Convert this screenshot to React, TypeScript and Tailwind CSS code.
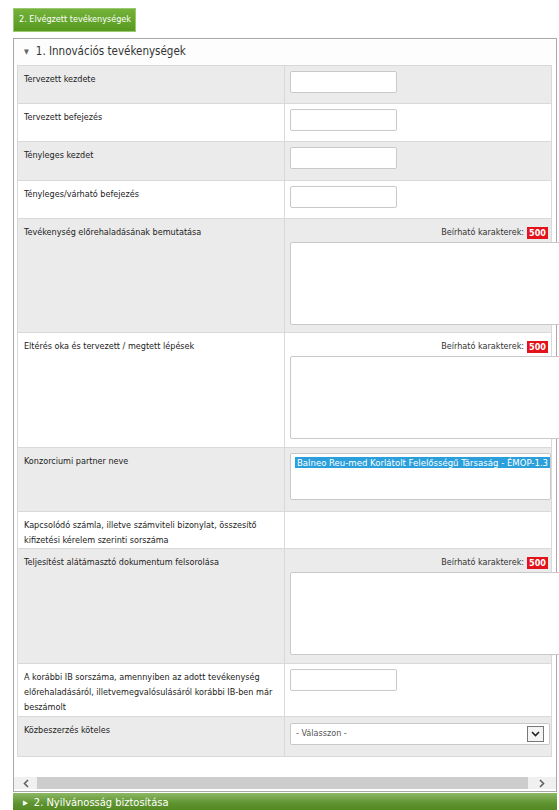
import React from "react";

const font = "font-['DejaVu_Sans_Condensed','DejaVu_Sans',sans-serif]";

type Row = {
  label: string[];
  kind: "input" | "textarea" | "list" | "empty" | "select";
  h: string;
};

const rows: Row[] = [
  { label: ["Tervezett kezdete"], kind: "input", h: "h-[38px]" },
  { label: ["Tervezett befejezés"], kind: "input", h: "h-[38px]" },
  { label: ["Tényleges kezdet"], kind: "input", h: "h-[39px]" },
  { label: ["Tényleges/várható befejezés"], kind: "input", h: "h-[38px]" },
  { label: ["Tevékenység előrehaladásának bemutatása"], kind: "textarea", h: "h-[114px]" },
  { label: ["Eltérés oka és tervezett / megtett lépések"], kind: "textarea", h: "h-[115px]" },
  { label: ["Konzorciumi partner neve"], kind: "list", h: "h-[64px]" },
  {
    label: ["Kapcsolódó számla, illetve számviteli bizonylat, összesítő", "kifizetési kérelem szerinti sorszáma"],
    kind: "empty",
    h: "h-[37px]",
  },
  { label: ["Teljesítést alátámasztó dokumentum felsorolása"], kind: "textarea", h: "h-[115px]" },
  {
    label: [
      "A korábbi IB sorszáma, amennyiben az adott tevékenység",
      "előrehaladásáról, illetvemegvalósulásáról korábbi IB-ben már",
      "beszámolt",
    ],
    kind: "input",
    h: "h-[53px]",
  },
  { label: ["Közbeszerzés köteles"], kind: "select", h: "h-[40px]" },
];

function Cell({ row }: { row: Row }) {
  if (row.kind === "input") {
    return <div className="mt-[5px] h-[22px] w-[107px] rounded-[2px] border border-[#c9c9c9] bg-white" />;
  }
  if (row.kind === "textarea") {
    return (
      <div className="pt-[7px]">
        <div className="flex items-center justify-end pr-[3px] text-[9px] text-[#333]">
          <span>Beírható karakterek:</span>
          <span className="ml-[3px] bg-[#e3131b] px-[2px] font-bold leading-[12px] text-white">500</span>
        </div>
        <div className="relative z-10 mt-[2px] h-[83px] w-[300px] rounded-[2px] border border-[#c9c9c9] bg-white" />
      </div>
    );
  }
  if (row.kind === "list") {
    return (
      <div className="mt-[5px] h-[47px] w-[261px] overflow-hidden rounded-[2px] border border-[#c9c9c9] bg-white pl-[4px] pt-[3px]">
        <div className="whitespace-nowrap bg-[#2a9fdb] pl-[2px] text-[9.5px] leading-[11px] text-white">
          Balneo Reu-med Korlátolt Felelősségű Társaság - ÉMOP-1.3
        </div>
      </div>
    );
  }
  if (row.kind === "select") {
    return (
      <div className="mt-[6px] flex h-[22px] w-[260px] items-center justify-between rounded-[2px] border border-[#c9c9c9] bg-white pl-[5px] pr-[5px]">
        <span className="text-[9px] text-[#555]">- Válasszon -</span>
        <div className="flex h-[16px] w-[17px] items-center justify-center border border-[#777] bg-[#f4f4f4]">
          <svg width="9" height="6" viewBox="0 0 9 6">
            <path d="M1 1 L4.5 4.5 L8 1" fill="none" stroke="#222" strokeWidth="1.6" />
          </svg>
        </div>
      </div>
    );
  }
  return null;
}

export default function App() {
  return (
    <div className={`relative h-[810px] w-[559px] overflow-hidden bg-white ${font}`}>
      <div className="pl-[13px] pt-[8px]">
        <div className="flex h-[24px] w-[123px] items-center border border-[#9bc870] bg-gradient-to-b from-[#74b23a] to-[#579a20] pl-[5px] text-[9px] text-white">
          2. Elvégzett tevékenységek
        </div>
      </div>

      <div className="ml-[13px] mt-[6px] w-[544px] border border-[#a9a9a9] bg-white">
        <div className="flex h-[26px] items-center bg-[#fdfdfd] pl-[10px] text-[11.5px] text-[#333]">
          <span className="mr-[7px] text-[7px] text-[#666]">▼</span>
          1. Innovációs tevékenységek
        </div>

        <div className="pl-[3px]">
          <table className="w-[534px] table-fixed border-collapse border border-[#d9d9d9] text-[9px] text-[#222]">
            <colgroup>
              <col className="w-[267px]" />
              <col className="w-[267px]" />
            </colgroup>
            <tbody>
              {rows.map((row, i) => (
                <tr key={i} className={`${row.h} ${i % 2 === 0 ? "bg-[#ebebeb]" : "bg-white"}`}>
                  <td className="border border-[#d9d9d9] pl-[6px] pt-[6px] align-top leading-[15px]">
                    {row.label.map((l, j) => (
                      <div key={j} className="whitespace-nowrap">
                        {l}
                      </div>
                    ))}
                  </td>
                  <td className="overflow-visible border border-[#d9d9d9] pl-[5px] align-top">
                    <Cell row={row} />
                  </td>
                </tr>
              ))}
            </tbody>
          </table>
        </div>

        <div className="mt-[20px] flex h-[12px] items-center bg-[#f0f0f0] text-[#555]">
          <div className="flex w-[23px] justify-center">
            <svg width="6" height="9" viewBox="0 0 6 9">
              <path d="M5 1 L1.5 4.5 L5 8" fill="none" stroke="#606060" strokeWidth="1.6" />
            </svg>
          </div>
          <div className="h-full w-[491px] bg-[#cdcdcd]" />
          <div className="flex flex-1 justify-center">
            <svg width="6" height="9" viewBox="0 0 6 9">
              <path d="M1 1 L4.5 4.5 L1 8" fill="none" stroke="#606060" strokeWidth="1.6" />
            </svg>
          </div>
        </div>
        <div className="h-[2px]" />
      </div>

      <div className="ml-[13px] mt-[1px] flex h-[20px] w-[544px] items-center bg-gradient-to-b from-[#8db865] via-[#5f9530] to-[#4d821f] pl-[10px] text-[11px] text-white">
        <span className="mr-[6px] text-[7px]">▶</span>
        2. Nyilvánosság biztosítása
      </div>
    </div>
  );
}
